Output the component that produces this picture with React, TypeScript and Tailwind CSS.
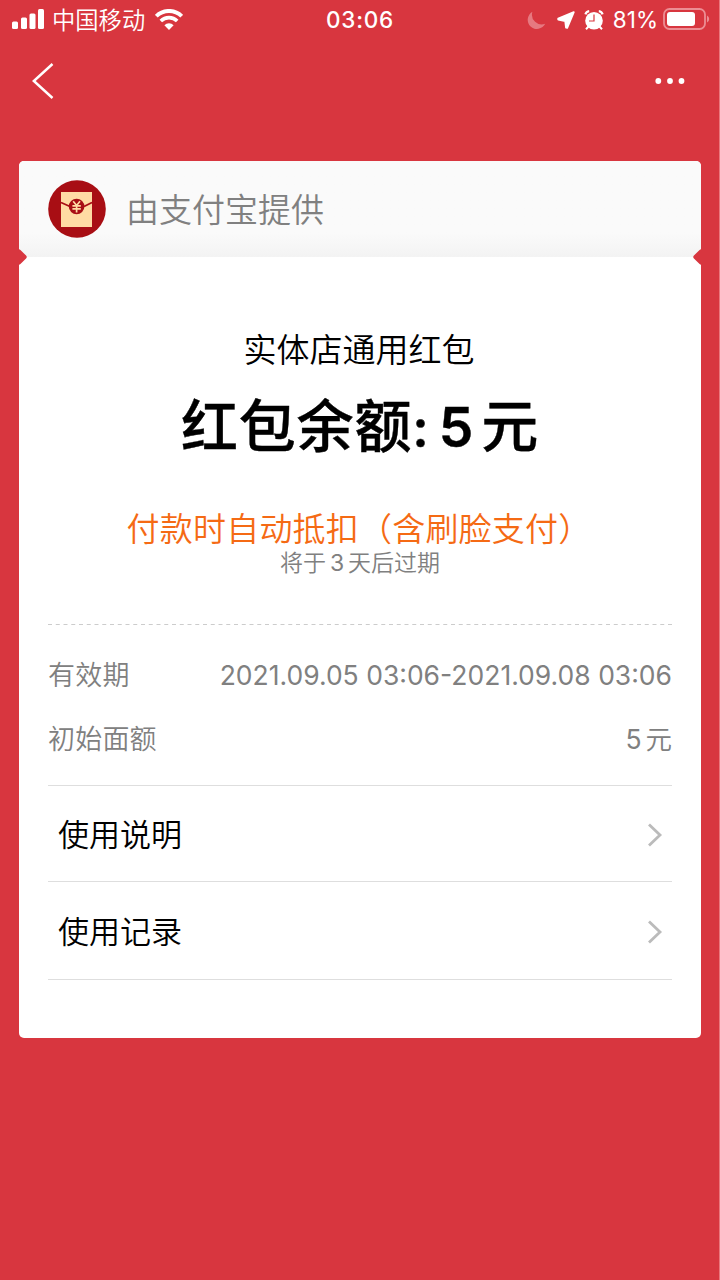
import React from "react";

interface DetailRowProps {
  label: string;
  children: React.ReactNode;
}

function StatusBar() {
  return (
    <div className="h-10 flex items-center justify-between pl-3 pr-[9px] text-white">
      <div className="w-[240px] flex items-center">
        <svg className="-mt-0.5" width="33" height="20" viewBox="0 0 33 20" fill="currentColor">
          <rect x="0" y="12.5" width="6" height="7.5" rx="1.5" />
          <rect x="9" y="8.5" width="6" height="11.5" rx="1.5" />
          <rect x="17.5" y="4.5" width="6" height="15.5" rx="1.5" />
          <rect x="26" y="0" width="6" height="20" rx="1.5" />
        </svg>
        <span className="relative top-px ml-[7px] text-[23.3px] leading-10 font-[350]">中国移动</span>
        <svg className="-mt-0.5 ml-2.5" width="28" height="21" viewBox="0 0 28 21" fill="none" stroke="currentColor">
          <path d="M1.3 7.2A18 18 0 0 1 26.7 7.2" strokeWidth="4" />
          <path d="M5.8 12A11.6 11.6 0 0 1 22.2 12" strokeWidth="3.6" />
          <path d="M9.4 16.2A6.5 6.5 0 0 1 18.6 16.2L14 21Z" fill="currentColor" stroke="none" />
        </svg>
      </div>
      <span className="-ml-0.5 text-[22.5px] leading-10 font-medium tracking-[0.8px]">03:06</span>
      <div className="w-[240px] flex items-center justify-end">
        <svg width="19" height="19" viewBox="0 0 19 19" fill="#e67980">
          <path d="M5.4 0.8A9.2 9.2 0 1 0 18.2 12.8A9.8 9.8 0 0 1 5.4 0.8Z" />
        </svg>
        <svg
          className="ml-[11px] -mt-px"
          width="18"
          height="18"
          viewBox="0 0 18 18"
          fill="currentColor"
          stroke="currentColor"
          strokeWidth="1.8"
          strokeLinejoin="round"
        >
          <path d="M16.8 1.1L10.2 16.8L9 16.6L8.2 10L1.2 8.6L1.2 7.7Z" />
        </svg>
        <svg className="ml-[9px] -mt-px" width="20" height="20" viewBox="0 0 20 20" fill="none" stroke="currentColor">
          <circle cx="10" cy="10.7" r="8.8" fill="currentColor" stroke="none" />
          <path d="M1.4 4.4A4.4 4.4 0 0 1 5.2 1.2M14.8 1.2A4.4 4.4 0 0 1 18.6 4.4" strokeWidth="2.2" />
          <path d="M4.5 16.5L2 19.2M15.5 16.5L18 19.2" strokeWidth="2" />
          <path d="M10 4.5V11H5" stroke="#d8363f" strokeWidth="1.2" />
        </svg>
        <span className="ml-[9px] text-[22.5px] leading-10">81%</span>
        <svg className="-mt-0.5 ml-[5px]" width="47" height="22" viewBox="0 0 47 22" fill="none">
          <rect x="1" y="1" width="41" height="20" rx="5.5" stroke="#ec8d93" strokeWidth="1.8" />
          <rect x="4" y="4" width="28" height="14" rx="3" fill="white" />
          <path d="M44 7.5Q46.2 8.5 46.2 11T44 14.5Z" fill="#ec8d93" />
        </svg>
      </div>
    </div>
  );
}

function NavBar() {
  return (
    <div className="h-[81px] flex items-center justify-between pl-8 pr-[34px] text-white">
      <svg width="22" height="36" viewBox="0 0 22 36" fill="none" stroke="currentColor" strokeWidth="2.5">
        <path d="M20.5 1L1.8 18L20.5 35" />
      </svg>
      <svg width="30" height="6" viewBox="0 0 30 6" fill="currentColor">
        <circle cx="3.3" cy="3" r="2.9" />
        <circle cx="15" cy="3" r="2.9" />
        <circle cx="26.5" cy="3" r="2.9" />
      </svg>
    </div>
  );
}

function EnvelopeLogo() {
  return (
    <svg width="58" height="58" viewBox="0 0 58 58">
      <circle cx="29" cy="29" r="28.8" fill="#a80e14" />
      <rect x="13" y="12" width="31" height="35" fill="#ffdba4" />
      <path d="M13 22.5L22 26.5M36 26.5L44 22.5" stroke="#a80e14" strokeWidth="1.8" />
      <circle cx="28.6" cy="26.5" r="7.8" fill="#a80e14" />
      <path
        d="M25.2 21.3L28.6 25.5L32 21.3M24.4 25.8H32.8M24.4 28.9H32.8M28.6 25.5V32.4"
        fill="none"
        stroke="#ffdba4"
        strokeWidth="1.7"
      />
    </svg>
  );
}

function DetailRow({ label, children }: DetailRowProps) {
  return (
    <div className="h-16 flex items-center justify-between text-[27px] leading-[40px] text-[#808080]">
      <span className="relative top-px font-[350] tracking-[0.2px]">{label}</span>
      <span className="text-[26.5px] font-normal">{children}</span>
    </div>
  );
}

function LinkRow({ label, className }: { label: string; className: string }) {
  return (
    <a className={`flex items-center justify-between pl-2.5 pr-[9px] border-b border-[#dedede] ${className}`}>
      <span className="relative top-px text-[31px] leading-[44px] font-[350] text-black">{label}</span>
      <svg className="relative top-px" width="16" height="24" viewBox="0 0 16 24" fill="none" stroke="#bbbbbb" strokeWidth="2.8">
        <path d="M2 1.5L13 12L2 22.5" />
      </svg>
    </a>
  );
}

export default function App() {
  return (
    <div className="w-[720px] h-[1280px] overflow-hidden bg-[#d8363f] border-r border-[#ea777d] font-[Inter,'Noto_Sans_CJK_SC',sans-serif]">
      <StatusBar />
      <NavBar />
      <div className="relative mt-10 ml-[19px] w-[682px] h-[877px] rounded-[5px] overflow-hidden bg-white">
        <div className="h-24 flex items-center pl-[29px] bg-linear-to-b from-[#fafafa] from-75% to-[#f3f3f3]">
          <EnvelopeLogo />
          <span className="relative top-px ml-5 text-[33px] leading-[48px] font-[350] text-[#808080]">由支付宝提供</span>
        </div>
        {/* ticket notches */}
        <div className="absolute -left-[6px] top-[90px] size-3 rotate-45 rounded-[2px] bg-[#d8363f]" />
        <div className="absolute -right-[6px] top-[90px] size-3 rotate-45 rounded-[2px] bg-[#d8363f]" />

        <div className="h-[367px] flex flex-col items-center pt-[69px] pr-0.5 text-center whitespace-nowrap">
          <p className="text-[33px] leading-[48px] font-[350] text-black">实体店通用红包</p>
          <h1 className="mt-[13px] ml-0.5 h-20 text-[57px] leading-[80px] font-medium tracking-[0.8px] text-black [-webkit-text-stroke:0.4px_black]">
            红包余额
            <span className="text-[52px] font-semibold tracking-normal">:</span>
            <span className="ml-[10px] mr-[7px] text-[55px] font-semibold">5</span>元
          </h1>
          <p className="mt-[38px] text-[33px] leading-[48px] font-[350] tracking-[0.2px] text-[#f56a14]">
            付款时自动抵扣（含刷脸支付）
          </p>
          <p className="-mt-1.5 ml-0.5 text-[23px] leading-8 font-[350] text-[#808080]">
            将于<span className="mx-1 font-normal">3</span>天后过期
          </p>
        </div>

        <div className="mx-[29px]">
          <svg className="block" width="624" height="1">
            <path d="M0 0.5H624" stroke="#cccccc" strokeDasharray="4 3.75" />
          </svg>
          <div className="pt-[18px] h-[161px] border-b border-[#dedede]">
            <DetailRow label="有效期">2021.09.05 03:06-2021.09.08 03:06</DetailRow>
            <DetailRow label="初始面额">
              5<span className="ml-1 font-[350]">元</span>
            </DetailRow>
          </div>
          <LinkRow label="使用说明" className="h-24" />
          <LinkRow label="使用记录" className="h-[98px]" />
        </div>
      </div>
    </div>
  );
}
